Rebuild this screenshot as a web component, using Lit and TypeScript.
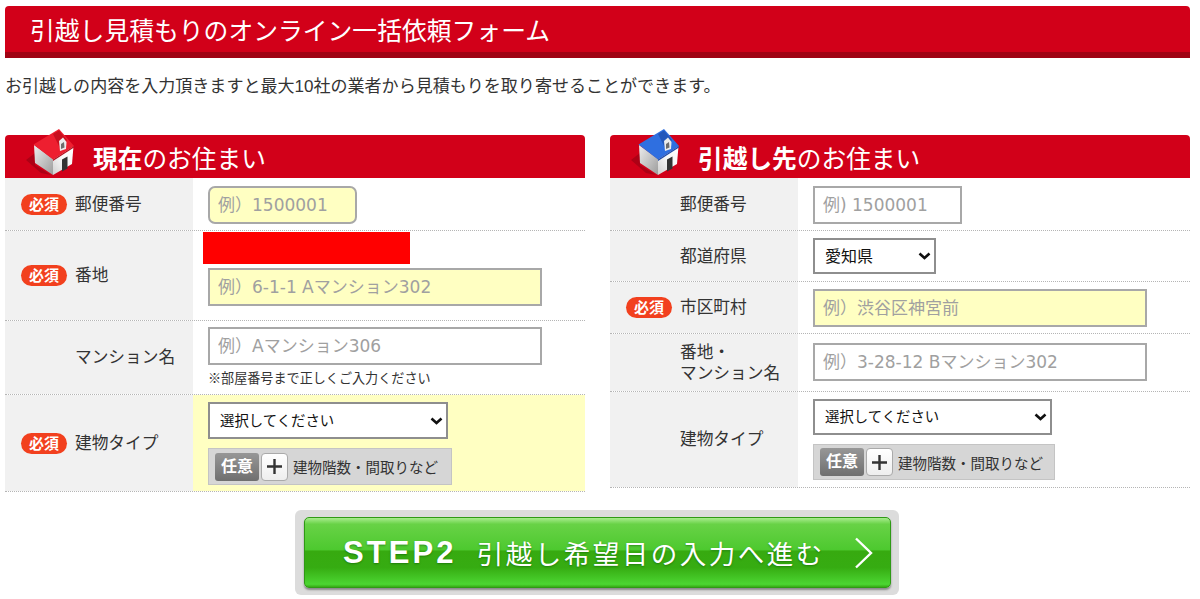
import { LitElement, html, css, svg } from "lit";
import { customElement } from "lit/decorators.js";

const house = (roof: string, shade: string, edge: string) => html`<svg class="house" viewBox="0 0 60 55" width="60" height="55">
  ${svg`
  <defs>
    <linearGradient id="wall" x1="0" y1="0" x2="1" y2="1"><stop offset="0" stop-color="#eee"/><stop offset="1" stop-color="#9c9c9c"/></linearGradient>
    <linearGradient id="front" x1="0" y1="1" x2="1" y2="0"><stop offset="0" stop-color="#cfcfcf"/><stop offset=".5" stop-color="#f7f7f7"/><stop offset="1" stop-color="#fff"/></linearGradient>
  </defs>
  <polygon points="1,35 10,28 10,40 26,50 16,48" fill="#8e0012" opacity=".55"/>
  <polygon points="9,20 10,38 28,50 28,34" fill="url(#wall)"/>
  <polygon points="28,34 48.5,21 47,39 28,50" fill="url(#front)"/>
  <polygon points="8.5,19.5 34,4 49,21 28,34.5" fill="${roof}"/>
  <polygon points="28,34.5 49,21 49,22.5 28,36" fill="${edge}"/>
  <polygon points="28,9 34,5.5 42,15 36,25" fill="${shade}"/>
  <polygon points="34,16 38,12.5 41.5,17 41,24 35,26" fill="#ececec"/>
  <polygon points="36,19 39,17 39.5,22.5 36,24" fill="#6d6d6d"/>
  <polygon points="37,34.5 42.5,31.5 42.5,43.5 37,46.5" fill="#333"/>
  `}
</svg>`;

type Row = { label: unknown; req?: boolean; body: unknown; cls: string; yellow?: boolean };

@customElement("app-root")
export class AppRoot extends LitElement {
  static styles = css`
    :host { display: block; width: 1200px; height: 599px; overflow: hidden; background: #fff;
      font-family: "Liberation Sans", "Noto Sans CJK JP", sans-serif; color: #333; }
    .page { padding: 6px 10px 0 5px; display: flex; flex-direction: column; }
    .title { height: 46px; background: #d20019; border-bottom: 6px solid #a00314; border-radius: 4px 4px 0 0;
      color: #fff; font-size: 24.8px; line-height: 51px; padding-left: 25px; white-space: nowrap; }
    .desc { margin: 17px 0 0; font-size: 17.05px; line-height: 24px; height: 24px; white-space: nowrap; }
    .cols { display: grid; grid-template-columns: 580px 580px; column-gap: 25px; margin-top: 36px; align-items: start; }
    .head { position: relative; height: 43px; background: #d20019; border-radius: 4px 4px 0 0; color: #fff;
      font-size: 24.7px; line-height: 49px; padding-left: 88px; white-space: nowrap; }
    .head b { font-weight: 700; }
    .house { position: absolute; left: 0; top: -10px; margin-left: 20px; }
    .row { display: flex; box-sizing: border-box; border-bottom: 1px dotted #b5b5b5; }
    .h51 { height: 51px; } .h52 { height: 52px; } .h53 { height: 53px; } .h58 { height: 58px; }
    .h74 { height: 74px; } .h90 { height: 90px; } .h96 { height: 96px; } .h97 { height: 97px; }
    .lab { width: 188px; flex: none; background: #f1f1f1; display: flex; align-items: center; box-sizing: border-box;
      padding-left: 70px; font-size: 16.7px; line-height: 21px; color: #333; }
    .lab.req { padding-left: 16px; gap: 8px; }
    .badge { width: 46px; height: 21px; flex: none; border-radius: 11px; background: #f2401e; color: #fff;
      font-size: 15px; font-weight: 700; line-height: 21px; text-align: center; }
    .val { flex: 1; padding: 7px 15px 0; position: relative; display: flex; flex-direction: column; align-items: flex-start; }
    .val.p8 { padding-top: 8px; } .val.p6 { padding-top: 6px; } .val.p9 { padding-top: 9px; }
    .val.y { background: #ffffc2; }
    input { box-sizing: border-box; height: 38px; border: 2px solid #a8a8a8; padding: 0 8px; margin: 0; background: #fff;
      font: 17px "DejaVu Sans", "Noto Sans CJK JP", sans-serif; color: #333; outline: none; }
    input::placeholder { color: #a0a0a0; opacity: 1; }
    input.y { background: #ffffc2; }
    .zip { width: 149px; }
    .zip.round { border-radius: 7px; }
    .wide { width: 334px; }
    select { box-sizing: border-box; appearance: none; -webkit-appearance: none; background-color: #fff; border: 2px solid #8e8e8e; border-radius: 0; margin: 0; padding: 0 6px 0 10px;
      background-image: url("data:image/svg+xml,%3Csvg xmlns='http://www.w3.org/2000/svg' width='13' height='8'%3E%3Cpath d='M1.5 1.5 6.5 6l5-4.5' fill='none' stroke='%23111' stroke-width='2.6'/%3E%3C/svg%3E");
      background-repeat: no-repeat; background-position: right 3px center;
      font: 14.4px "Liberation Sans", "Noto Sans CJK JP", sans-serif; color: #111; }
    .type { width: 240px; height: 37px; }
    .type.alt { width: 239px; height: 36px; }
    .pref { width: 123px; height: 36px; font-size: 16px; }
    .redact { position: absolute; left: 10px; top: 1px; width: 207px; height: 32px; background: #f00; }
    .spacer { height: 29px; }
    .note { font-size: 13.1px; line-height: 16px; margin-top: 6px; color: #333; white-space: nowrap; }
    .opt { box-sizing: border-box; width: 244px; height: 37px; margin-top: 9px; background: #d6d6d6; border: 1px solid #c4c4c4;
      display: flex; align-items: center; padding-left: 6px; font-size: 14.5px; color: #333; white-space: nowrap; }
    .opt.alt { width: 242px; height: 36px; }
    .any { width: 44px; height: 28px; border-radius: 3px; background: linear-gradient(#979797, #6f6f6f); color: #fff;
      font-size: 16px; font-weight: 700; line-height: 27px; text-align: center; }
    .plus { box-sizing: border-box; width: 27px; height: 28px; margin: 0 5px 0 2px; border: 1px solid #aaa; border-radius: 4px;
      background: linear-gradient(#fff, #eee); display: flex; align-items: center; justify-content: center; }
    .foot { display: flex; margin: 18px 0 0 290px; }
    .btnwrap { box-sizing: border-box; width: 604px; height: 85px; background: #dcdcdc; border-radius: 6px; padding: 7px 8px 7px 9px; }
    .btn { box-sizing: border-box; width: 587px; height: 71px; border: 1px solid #2f9a15; border-radius: 5px; padding: 0 16px 0 38px; cursor: pointer;
      background: linear-gradient(#a8ec8e 0, #68d246 9%, #4dc92f 46%, #37aa10 48%, #36ac12 72%, #4cd632 96%, #35ab14 100%);
      box-shadow: 0 2px 2px #8a8a8a; display: flex; align-items: center; color: #fff; white-space: nowrap;
      text-shadow: 0 1px 2px rgba(0,70,0,.45); }
    .step { font: 700 31px "Liberation Sans", sans-serif; letter-spacing: 3.1px; margin-right: 20px; }
    .go { font-size: 26.5px; letter-spacing: 2.5px; flex: 1; }
  `;

  private field(ph: string, cls: string) {
    return html`<input class=${cls} type="text" placeholder=${ph} />`;
  }

  private option(alt = "") {
    return html`<div class="opt ${alt}"><span class="any">任意</span><span class="plus">
      <svg width="17" height="17" viewBox="0 0 17 17"><path d="M8.5 1v15M1 8.5h15" stroke="#333" stroke-width="2.4" fill="none"/></svg>
    </span><span>建物階数・間取りなど</span></div>`;
  }

  private rows(rows: Row[]) {
    return rows.map(r => {
      const [h, p = ""] = r.cls.split(" ");
      return html`<div class="row ${h}">
        <div class="lab ${r.req ? "req" : ""}">${r.req ? html`<span class="badge">必須</span>` : ""}<span>${r.label}</span></div>
        <div class="val ${p} ${r.yellow ? "y" : ""}">${r.body}</div>
      </div>`;
    });
  }

  render() {
    const left: Row[] = [
      { label: "郵便番号", req: true, cls: "h53 p8", body: this.field("例）1500001", "zip round y") },
      { label: "番地", req: true, cls: "h90 p8", body: html`<div class="redact"></div><div class="spacer"></div>${this.field("例）6-1-1 Aマンション302", "wide y")}` },
      { label: "マンション名", cls: "h74 p6", body: html`${this.field("例）Aマンション306", "wide")}<div class="note">※部屋番号まで正しくご入力ください</div>` },
      { label: "建物タイプ", req: true, cls: "h97", yellow: true, body: html`<select class="type"><option>選択してください</option></select>${this.option()}` },
    ];
    const right: Row[] = [
      { label: "郵便番号", cls: "h53 p8", body: this.field("例) 1500001", "zip") },
      { label: "都道府県", cls: "h51", body: html`<select class="pref"><option>愛知県</option></select>` },
      { label: "市区町村", req: true, cls: "h52", body: this.field("例）渋谷区神宮前", "wide y") },
      { label: html`番地・<br />マンション名`, cls: "h58 p9", body: this.field("例）3-28-12 Bマンション302", "wide") },
      { label: "建物タイプ", cls: "h96", body: html`<select class="type alt"><option>選択してください</option></select>${this.option("alt")}` },
    ];
    return html`<div class="page">
      <div class="title">引越し見積もりのオンライン一括依頼フォーム</div>
      <p class="desc">お引越しの内容を入力頂きますと最大10社の業者から見積もりを取り寄せることができます。</p>
      <div class="cols">
        <section>
          <div class="head">${house("#ee1f30", "#c8101f", "#b50d1c")}<b>現在</b>のお住まい</div>
          ${this.rows(left)}
        </section>
        <section>
          <div class="head">${house("#2f6fe0", "#2257bb", "#1c4aa8")}<b>引越し先</b>のお住まい</div>
          ${this.rows(right)}
        </section>
      </div>
      <div class="foot"><div class="btnwrap">
        <div class="btn" role="button">
          <span class="step">STEP2</span><span class="go">引越し希望日の入力へ進む</span>
          <svg width="20" height="32" viewBox="0 0 20 32"><path d="M2 1.5 17 16 2 30.5" fill="none" stroke="#fff" stroke-width="2.4"/></svg>
        </div>
      </div></div>
    </div>`;
  }
}
